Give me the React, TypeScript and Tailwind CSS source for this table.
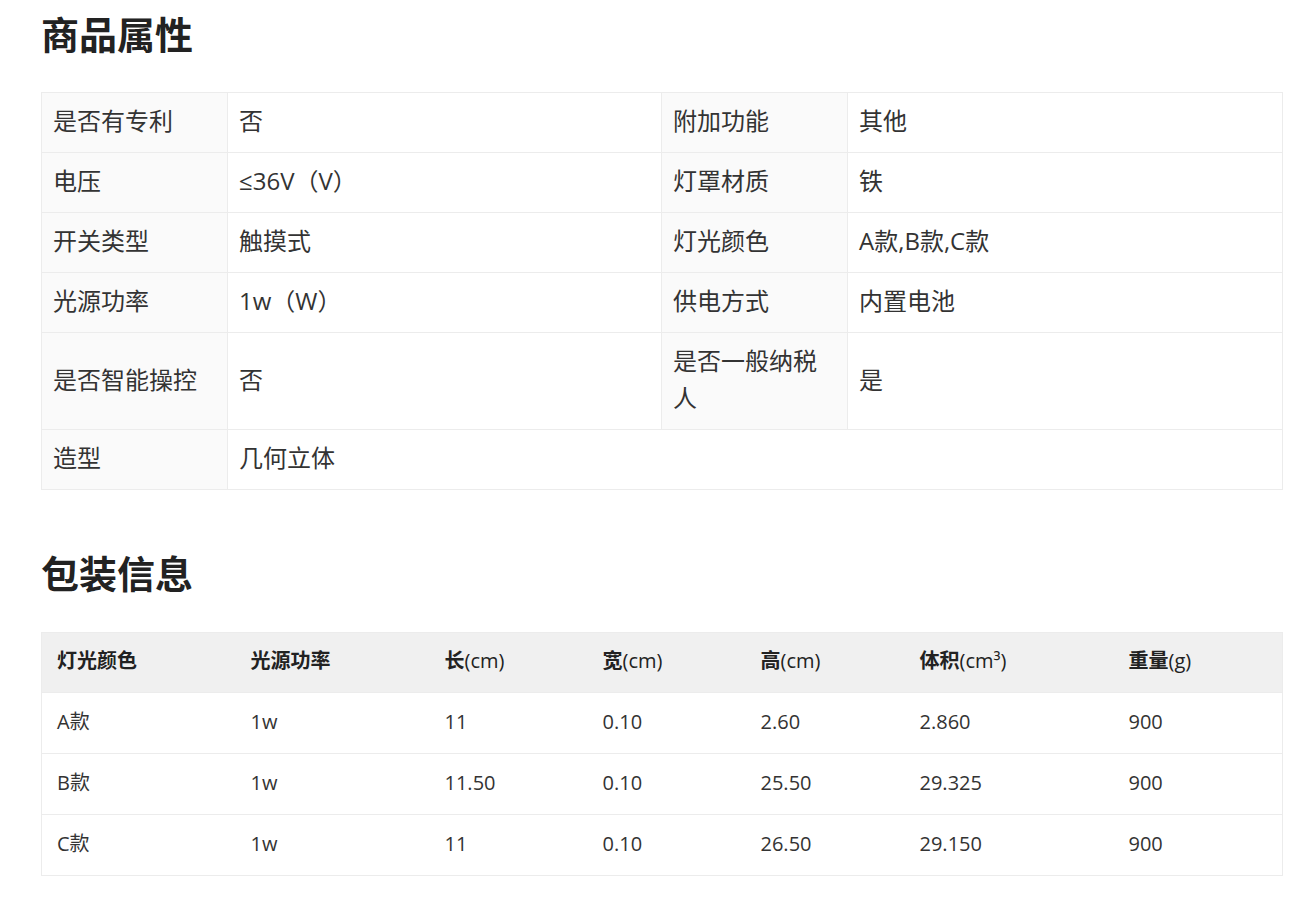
const attrs: [string, string, string, string][] = [
  ['是否有专利', '否', '附加功能', '其他'],
  ['电压', '≤36V（V）', '灯罩材质', '铁'],
  ['开关类型', '触摸式', '灯光颜色', 'A款,B款,C款'],
  ['光源功率', '1w（W）', '供电方式', '内置电池'],
  ['是否智能操控', '否', '是否一般纳税人', '是'],
]

// header text split: bold CJK part + lighter unit part
const pkgCols: [string, string][] = [
  ['灯光颜色', ''],
  ['光源功率', ''],
  ['长', '(cm)'],
  ['宽', '(cm)'],
  ['高', '(cm)'],
  ['体积', '(cm³)'],
  ['重量', '(g)'],
]
const pkgWidths = ['w-[194px]', 'w-[194px]', 'w-[158px]', 'w-[158px]', 'w-[159px]', 'w-[209px]', 'w-[169px]']
const pkgRows = [
  ['A款', '1w', '11', '0.10', '2.60', '2.860', '900'],
  ['B款', '1w', '11.50', '0.10', '25.50', '29.325', '900'],
  ['C款', '1w', '11', '0.10', '26.50', '29.150', '900'],
]

const font = { fontFamily: '"Open Sans", "Noto Sans", "Noto Sans CJK SC", sans-serif' }

export default function App() {
  const label = 'bg-[#fafafa] border border-[#ececec] px-[11px] pt-[9px] pb-[13px] align-middle'
  const value = 'bg-white border border-[#ececec] px-[11px] pt-[9px] pb-[13px] align-middle'

  return (
    <div className="min-h-[916px] bg-white text-[#333]" style={font}>
      <div className="ml-[41px] w-[1241px]">
        <h1 className="pt-[6px] text-[38px] leading-[56px] font-bold text-[#222]">商品属性</h1>

        <table className="mt-[30px] w-full table-fixed border-collapse text-[24px] leading-[37px]">
          <colgroup>
            <col className="w-[186px]" />
            <col className="w-[434px]" />
            <col className="w-[186px]" />
            <col className="w-[435px]" />
          </colgroup>
          <tbody>
            {attrs.map((r) => (
              <tr key={r[0]}>
                <td className={label}>{r[0]}</td>
                <td className={value}>{r[1]}</td>
                <td className={label}>{r[2]}</td>
                <td className={value}>{r[3]}</td>
              </tr>
            ))}
            <tr>
              <td className={label}>造型</td>
              <td className={value} colSpan={3}>几何立体</td>
            </tr>
          </tbody>
        </table>

        <h2 className="mt-[55px] text-[38px] leading-[56px] font-bold text-[#222]">包装信息</h2>

        <table className="mt-[31px] w-full table-fixed border-collapse border border-[#ececec] text-[20px] leading-[30px]">
          <colgroup>
            {pkgWidths.map((w, i) => (
              <col key={i} className={w} />
            ))}
          </colgroup>
          <thead>
            <tr className="bg-[#f0f0f0]">
              {pkgCols.map(([c, unit]) => (
                <th key={c} className="h-[60px] px-[15px] pb-[3px] text-left font-bold text-[#222]">
                  {c}
                  {unit && <span className="font-medium">{unit}</span>}
                </th>
              ))}
            </tr>
          </thead>
          <tbody>
            {pkgRows.map((r) => (
              <tr key={r[0]} className="border-t border-[#ececec]">
                {r.map((v, i) => (
                  <td key={i} className="h-[61px] px-[15px] pb-[3px] align-middle">
                    {v}
                  </td>
                ))}
              </tr>
            ))}
          </tbody>
        </table>
      </div>
    </div>
  )
}
